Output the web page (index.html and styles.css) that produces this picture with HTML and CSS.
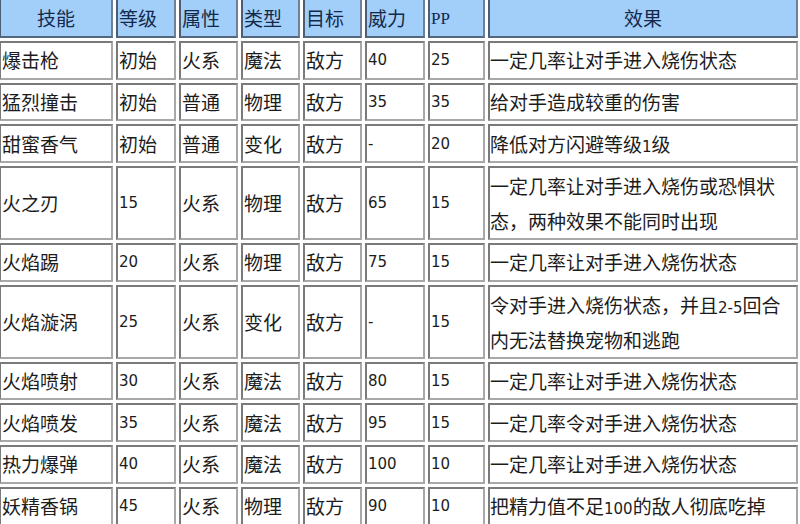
FILE: index.html
```html
<!DOCTYPE html>
<html lang="zh">
<head>
<meta charset="utf-8">
<title>技能表</title>
<link rel="stylesheet" href="styles.css">
</head>
<body>
<table class="skills">
  <colgroup>
    <col class="c1"><col class="c2"><col class="c3"><col class="c4"><col class="c5"><col class="c6"><col class="c7"><col class="c8">
  </colgroup>
  <thead>
    <tr>
      <th class="center">技能</th><th>等级</th><th>属性</th><th>类型</th><th>目标</th><th>威力</th><th><span class="pp">PP</span></th><th class="center">效果</th>
    </tr>
  </thead>
  <tbody>
    <tr><td>爆击枪</td><td>初始</td><td>火系</td><td>魔法</td><td>敌方</td><td class="num">40</td><td class="num">25</td><td class="eff">一定几率让对手进入烧伤状态</td></tr>
    <tr><td>猛烈撞击</td><td>初始</td><td>普通</td><td>物理</td><td>敌方</td><td class="num">35</td><td class="num">35</td><td class="eff">给对手造成较重的伤害</td></tr>
    <tr><td>甜蜜香气</td><td>初始</td><td>普通</td><td>变化</td><td>敌方</td><td class="num">-</td><td class="num">20</td><td class="eff">降低对方闪避等级<span class="n">1</span>级</td></tr>
    <tr><td>火之刃</td><td class="num">15</td><td>火系</td><td>物理</td><td>敌方</td><td class="num">65</td><td class="num">15</td><td class="eff two">一定几率让对手进入烧伤或恐惧状态，两种效果不能同时出现</td></tr>
    <tr><td>火焰踢</td><td class="num">20</td><td>火系</td><td>物理</td><td>敌方</td><td class="num">75</td><td class="num">15</td><td class="eff">一定几率让对手进入烧伤状态</td></tr>
    <tr><td>火焰漩涡</td><td class="num">25</td><td>火系</td><td>变化</td><td>敌方</td><td class="num">-</td><td class="num">15</td><td class="eff two">令对手进入烧伤状态，并且<span class="n">2-5</span>回合内无法替换宠物和逃跑</td></tr>
    <tr><td>火焰喷射</td><td class="num">30</td><td>火系</td><td>魔法</td><td>敌方</td><td class="num">80</td><td class="num">15</td><td class="eff">一定几率让对手进入烧伤状态</td></tr>
    <tr><td>火焰喷发</td><td class="num">35</td><td>火系</td><td>魔法</td><td>敌方</td><td class="num">95</td><td class="num">15</td><td class="eff">一定几率令对手进入烧伤状态</td></tr>
    <tr><td>热力爆弹</td><td class="num">40</td><td>火系</td><td>魔法</td><td>敌方</td><td class="num">100</td><td class="num">10</td><td class="eff">一定几率让对手进入烧伤状态</td></tr>
    <tr><td>妖精香锅</td><td class="num">45</td><td>火系</td><td>物理</td><td>敌方</td><td class="num">90</td><td class="num">10</td><td class="eff">把精力值不足<span class="n">100</span>的敌人彻底吃掉</td></tr>
  </tbody>
</table>
</body>
</html>
```

FILE: styles.css
```css
html, body {
  margin: 0;
  padding: 0;
  background: #ffffff;
  overflow: hidden;
}

.skills {
  border-collapse: separate;
  border-spacing: 3px;
  table-layout: fixed;
  width: 805px;
  margin: -7px 0 0 -4px;
  font-family: "Noto Sans CJK SC", "Noto Sans", sans-serif;
  font-size: 19px;
  color: #1c1c1c;
}

.c1 { width: 114px; }
.c2 { width: 60px; }
.c3 { width: 59px; }
.c4 { width: 59px; }
.c5 { width: 59px; }
.c6 { width: 60px; }
.c7 { width: 57px; }
.c8 { width: 310px; }

.skills th,
.skills td {
  box-sizing: border-box;
  padding: 0 1px;
  line-height: 34px;
  text-align: left;
  vertical-align: middle;
}

.skills th {
  background: #a2cefa;
  color: #13294a;
  font-weight: normal;
  border: 2px solid;
  border-color: #3e4f66 #6f8196 #55677d #4c5e76;
  line-height: 35px;
}

.skills td {
  height: 38.7px;
  background: #ffffff;
  border: 2px solid;
  border-color: #7a7a7a #a8a8a8 #a8a8a8 #7a7a7a;
}

.skills th.center { text-align: center; }

.skills td.num {
  font-family: "DejaVu Sans", sans-serif;
  font-size: 15px;
}

.skills td.eff { padding-left: 0; }

.skills td.two { line-height: 35px; }

.n {
  font-family: "DejaVu Sans", sans-serif;
  font-size: 15px;
  line-height: 1;
}

.pp {
  font-family: "Liberation Serif", serif;
  font-size: 17px;
}
```
